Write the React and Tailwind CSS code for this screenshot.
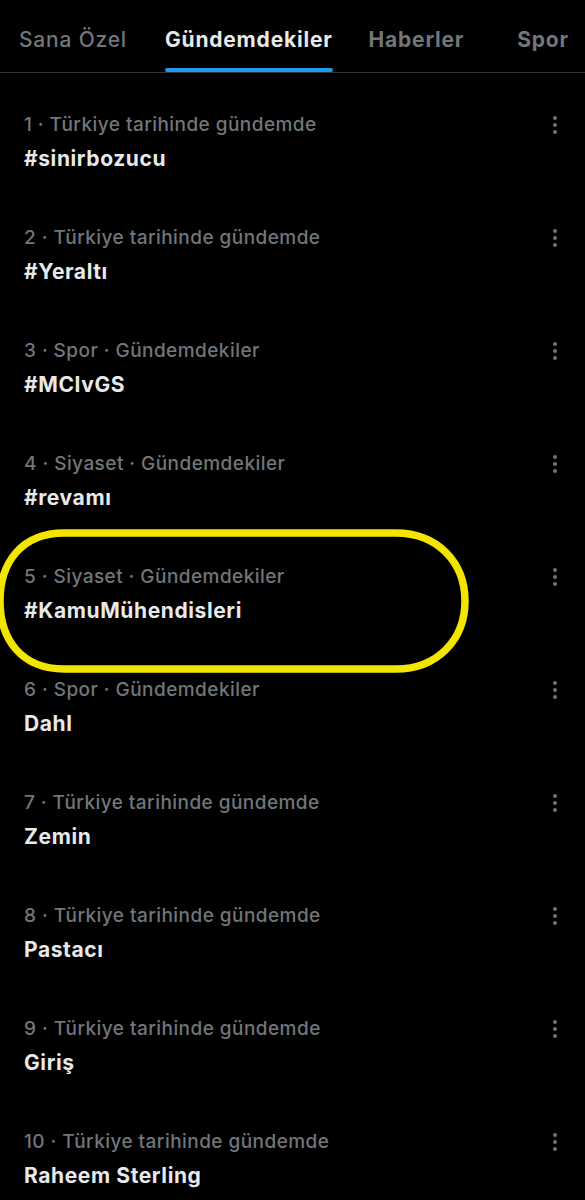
import React from 'react';

const trends = [
  { meta: '1 · Türkiye tarihinde gündemde', title: '#sinirbozucu' },
  { meta: '2 · Türkiye tarihinde gündemde', title: '#Yeraltı' },
  { meta: '3 · Spor · Gündemdekiler', title: '#MCIvGS' },
  { meta: '4 · Siyaset · Gündemdekiler', title: '#revamı' },
  { meta: '5 · Siyaset · Gündemdekiler', title: '#KamuMühendisleri', circled: true },
  { meta: '6 · Spor · Gündemdekiler', title: 'Dahl' },
  { meta: '7 · Türkiye tarihinde gündemde', title: 'Zemin' },
  { meta: '8 · Türkiye tarihinde gündemde', title: 'Pastacı' },
  { meta: '9 · Türkiye tarihinde gündemde', title: 'Giriş' },
  { meta: '10 · Türkiye tarihinde gündemde', title: 'Raheem Sterling' },
];

const MoreDots = () => (
  <div className="flex flex-col items-center gap-[3px]">
    <span className="w-[4px] h-[4px] rounded-full bg-[#6e7378]" />
    <span className="w-[4px] h-[4px] rounded-full bg-[#6e7378]" />
    <span className="w-[4px] h-[4px] rounded-full bg-[#6e7378]" />
  </div>
);

// yellow hand-drawn marker round a row
const Highlight = () => (
  <svg
    className="absolute left-0 top-0 pointer-events-none"
    width="585"
    height="160"
    viewBox="0 0 585 160"
  >
    <path
      d="M64 8 L396 8 C437 8 465 37 465 76 C465 115 437 144 396 144 L64 144 C22 144 0 115 0 76 C0 37 22 8 64 8 Z"
      fill="none"
      stroke="#f2e600"
      strokeWidth="7.5"
    />
  </svg>
);

const TrendRow = ({ item }) => (
  <div className="relative flex items-start justify-between pl-[24px] pr-[28px] pt-[40px] pb-[13px]">
    <div className="flex flex-col gap-[8px]">
      <span className="text-[19px] leading-[24px] tracking-[0.45px] font-medium text-[#71767b]">{item.meta}</span>
      <span className="text-[21px] leading-[28px] tracking-[0.6px] font-bold text-[#e7e9ea]">{item.title}</span>
    </div>
    <div className="pt-[3px]">
      <MoreDots />
    </div>
    {item.circled && <Highlight />}
  </div>
);

export default function App() {
  return (
    <div
      className="w-[585px] h-[1200px] overflow-hidden bg-black"
      style={{ fontFamily: 'Inter, "Noto Sans", sans-serif' }}
    >
      <div className="flex items-stretch h-[73px] border-b border-[#2f3336] pl-[19px] text-[21px] tracking-[0.8px]">
        <div className="flex items-center pt-[8px] font-medium text-[#71767b]">Sana Özel</div>
        <div className="relative flex items-center pt-[8px] ml-[38px] font-bold text-[#e7e9ea]">
          Gündemdekiler
          <span className="absolute left-0 right-0 bottom-0 h-[4px] rounded-full bg-[#1d9bf0]" />
        </div>
        <div className="flex items-center pt-[8px] ml-[36px] font-bold text-[#71767b]">Haberler</div>
        <div className="flex items-center pt-[8px] ml-[53px] font-bold text-[#71767b]">Spor</div>
      </div>
      <div className="flex flex-col">
        {trends.map((t) => (
          <TrendRow key={t.title} item={t} />
        ))}
      </div>
    </div>
  );
}
